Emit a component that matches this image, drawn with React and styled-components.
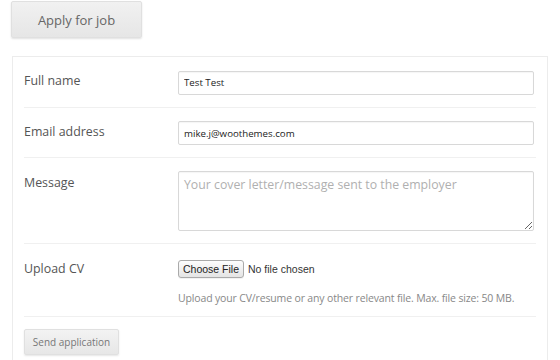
import React from 'react';
import styled, { createGlobalStyle } from 'styled-components';

const GlobalStyle = createGlobalStyle`
  html, body {
    margin: 0;
    padding: 0;
    background: #fff;
  }
  body {
    font-family: "Open Sans", "Liberation Sans", sans-serif;
    color: #555;
  }
`;

const Page = styled.div`
  padding: 1px 12px 0 12px;
`;

const ApplyButton = styled.button`
  display: block;
  width: 131px;
  height: 37px;
  margin: 0 0 18px -1px;
  font-family: inherit;
  font-size: 13px;
  color: #666;
  background: linear-gradient(#f1f1f1, #e6e6e6);
  border: 1px solid #e0e0e0;
  border-radius: 2px;
  box-shadow: 0 1px 2px rgba(0, 0, 0, 0.12);
  cursor: pointer;
`;

const Panel = styled.form`
  border: 1px solid #ececec;
  border-bottom: none;
  padding: 0 11px;
  height: 320px;
`;

const Row = styled.div`
  display: grid;
  grid-template-columns: 154px 1fr;
  padding: ${p => p.$top || 12}px 0 ${p => p.$bottom || 12}px;
  border-bottom: 1px solid #f0f0f0;
`;

const Label = styled.label`
  font-size: 12.4px;
  line-height: 24px;
  color: #555;
`;

const Field = styled.div`
  padding-right: 2px;
`;

const TextInput = styled.input`
  box-sizing: border-box;
  width: 100%;
  height: 24px;
  padding: 0 5px;
  font-family: inherit;
  font-size: 9.7px;
  color: #222;
  border: 1px solid #d8d8d8;
  border-radius: 2px;
  box-shadow: inset 0 1px 1px rgba(0, 0, 0, 0.04);
  outline: none;
`;

const TextArea = styled.textarea`
  box-sizing: border-box;
  display: block;
  width: 100%;
  height: 60px;
  padding: 4px 5px;
  font-family: inherit;
  font-size: 12.3px;
  color: #333;
  border: 1px solid #d8d8d8;
  border-radius: 2px;
  box-shadow: inset 0 1px 1px rgba(0, 0, 0, 0.04);
  outline: none;

  &::placeholder {
    color: #b0b0b0;
  }
`;

const FileLine = styled.div`
  display: flex;
  align-items: center;
  gap: 4px;
  height: 24px;
`;

const ChooseButton = styled.label`
  display: inline-flex;
  align-items: center;
  height: 16px;
  padding: 0 4px;
  font-family: "Liberation Sans", sans-serif;
  font-size: 10.5px;
  color: #222;
  background: linear-gradient(#fdfdfd, #e4e4e4);
  border: 1px solid #aaa;
  border-radius: 3px;
  box-shadow: 0 1px 0 rgba(0, 0, 0, 0.05);
  cursor: pointer;

  input {
    display: none;
  }
`;

const FileStatus = styled.span`
  font-family: "Liberation Sans", sans-serif;
  font-size: 10.5px;
  color: #333;
`;

const Help = styled.p`
  margin: 8px 0 0;
  font-size: 10.5px;
  line-height: 18px;
  letter-spacing: -0.15px;
  white-space: nowrap;
  color: #888;
`;

const SubmitRow = styled.div`
  padding-top: 12px;
`;

const SubmitButton = styled.button`
  width: 95px;
  height: 26px;
  font-family: inherit;
  font-size: 10px;
  color: #777;
  background: linear-gradient(#f3f3f3, #e7e7e7);
  border: 1px solid #e0e0e0;
  border-radius: 2px;
  box-shadow: 0 1px 2px rgba(0, 0, 0, 0.1);
  cursor: pointer;
`;

const App = () => {
  return (
    <Page>
      <GlobalStyle />
      <ApplyButton type="button">Apply for job</ApplyButton>
      <Panel onSubmit={e => e.preventDefault()}>
        <Row>
          <Label htmlFor="name">Full name</Label>
          <Field>
            <TextInput id="name" defaultValue="Test Test" />
          </Field>
        </Row>
        <Row>
          <Label htmlFor="email">Email address</Label>
          <Field>
            <TextInput id="email" defaultValue="mike.j@woothemes.com" />
          </Field>
        </Row>
        <Row $top={13} $bottom={12}>
          <Label htmlFor="msg">Message</Label>
          <Field>
            <TextArea id="msg" placeholder="Your cover letter/message sent to the employer" />
          </Field>
        </Row>
        <Row $top={13} $bottom={9}>
          <Label>Upload CV</Label>
          <Field>
            <FileLine>
              <ChooseButton>
                Choose File
                <input type="file" />
              </ChooseButton>
              <FileStatus>No file chosen</FileStatus>
            </FileLine>
            <Help>Upload your CV/resume or any other relevant file. Max. file size: 50 MB.</Help>
          </Field>
        </Row>
        <SubmitRow>
          <SubmitButton type="submit">Send application</SubmitButton>
        </SubmitRow>
      </Panel>
    </Page>
  );
};

export default App;
